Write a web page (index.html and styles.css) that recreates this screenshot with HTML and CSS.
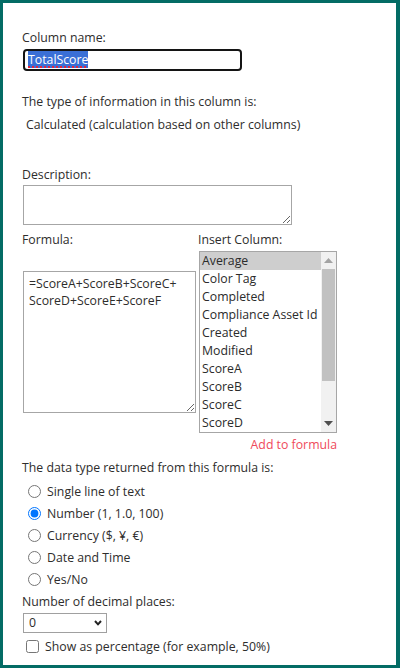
FILE: index.html
```html
<!DOCTYPE html>
<html lang="en">
<head>
<meta charset="utf-8">
<title>Column settings</title>
<link rel="stylesheet" href="styles.css">
</head>
<body>
<div class="panel">
  <div class="label">Column name:</div>
  <div class="name-input"><span class="sel">TotalScore</span></div>

  <div class="type-label">The type of information in this column is:</div>
  <div class="type-value">Calculated (calculation based on other columns)</div>

  <div class="desc-label">Description:</div>
  <textarea class="desc-box"></textarea>

  <div class="formula-row">
    <div class="formula-col">
      <div class="label">Formula:</div>
      <textarea class="formula-box">=ScoreA+ScoreB+ScoreC+
ScoreD+ScoreE+ScoreF</textarea>
    </div>
    <div class="insert-col">
      <div class="label">Insert Column:</div>
      <div class="listbox">
        <div class="items">
          <div class="item selected">Average</div>
          <div class="item">Color Tag</div>
          <div class="item">Completed</div>
          <div class="item">Compliance Asset Id</div>
          <div class="item">Created</div>
          <div class="item">Modified</div>
          <div class="item">ScoreA</div>
          <div class="item">ScoreB</div>
          <div class="item">ScoreC</div>
          <div class="item">ScoreD</div>
        </div>
        <div class="scrollbar">
          <div class="arrow up"><svg width="9" height="5" viewBox="0 0 9 5"><polygon points="0,5 4.5,0 9,5" fill="#a3a3a3"/></svg></div>
          <div class="track"><div class="thumb"></div></div>
          <div class="arrow down"><svg width="9" height="5" viewBox="0 0 9 5"><polygon points="0,0 4.5,5 9,0" fill="#505050"/></svg></div>
        </div>
      </div>
      <div class="add-link">Add to formula</div>
    </div>
  </div>

  <div class="return-label">The data type returned from this formula is:</div>
  <div class="radios">
    <label class="radio-row"><input type="radio" name="rt"><span>Single line of text</span></label>
    <label class="radio-row"><input type="radio" name="rt" checked><span>Number (1, 1.0, 100)</span></label>
    <label class="radio-row"><input type="radio" name="rt"><span>Currency ($, ¥, €)</span></label>
    <label class="radio-row"><input type="radio" name="rt"><span>Date and Time</span></label>
    <label class="radio-row"><input type="radio" name="rt"><span>Yes/No</span></label>
  </div>

  <div class="dec-label">Number of decimal places:</div>
  <div class="select"><span>0</span><svg class="chev" width="8" height="6" viewBox="0 0 8 6"><polyline points="1,1 4,4.3 7,1" fill="none" stroke="#222" stroke-width="2"/></svg></div>

  <label class="check-row"><input type="checkbox"><span>Show as percentage (for example, 50%)</span></label>
</div>
</body>
</html>
```

FILE: styles.css
```css
html, body {
  margin: 0;
  padding: 0;
  background: #ffffff;
}

.panel {
  box-sizing: border-box;
  width: 400px;
  height: 668px;
  border: 3px solid #036c65;
  border-right-width: 4px;
  padding: 26px 0 0 19px;
  font-family: "Open Sans", "Noto Sans", sans-serif;
  font-size: 12.3px;
  line-height: 17px;
  color: #2e2d2c;
  overflow: hidden;
}

.label {
  height: 17px;
}

.name-input {
  box-sizing: border-box;
  margin: 3px 0 0 1px;
  width: 219px;
  height: 22px;
  border: 2px solid #141414;
  border-radius: 4px;
  padding: 0 0 0 3px;
  line-height: 18px;
}

.sel {
  display: inline-block;
  background: #3a6fd6;
  color: #ffffff;
  line-height: 17px;
  text-decoration-line: underline;
  text-decoration-style: dotted;
  text-decoration-color: #e3263d;
  text-decoration-thickness: 2px;
  text-underline-offset: 2px;
}

.type-label {
  margin-top: 22px;
}

.type-value {
  margin-top: 6px;
  padding-left: 4px;
}

.desc-label {
  margin-top: 33px;
}

textarea {
  display: block;
  box-sizing: border-box;
  margin: 0;
  font: inherit;
  color: inherit;
  border: 1px solid #a6a6a6;
  border-radius: 0;
  outline: none;
  resize: both;
  background: #ffffff;
}

.desc-box {
  margin: 2px 0 0 1px;
  width: 269px;
  height: 40px;
  padding: 2px 5px;
}

.formula-row {
  display: flex;
  margin-top: 6px;
}

.formula-col {
  width: 176px;
}

.formula-box {
  margin: 23px 0 0 1px;
  width: 173px;
  height: 142px;
  padding: 3px 5px;
  line-height: 17px;
  overflow: hidden;
}

.insert-col {
  width: 139px;
}

.listbox {
  box-sizing: border-box;
  display: flex;
  margin: 3px 0 0 1px;
  width: 138px;
  height: 182px;
  border: 1px solid #a6a6a6;
}

.items {
  flex: 1;
  overflow: hidden;
  min-width: 0;
}

.item {
  height: 18px;
  line-height: 18px;
  padding-left: 2px;
  white-space: nowrap;
  overflow: hidden;
  color: #2b2b2b;
}

.item.selected {
  background: #cecece;
}

.scrollbar {
  width: 15px;
  background: #f1f1f1;
  display: flex;
  flex-direction: column;
}

.arrow {
  height: 17px;
  display: flex;
  align-items: center;
  justify-content: center;
}

.track {
  flex: 1;
  padding: 0 1px 0 1px;
}

.thumb {
  height: 112px;
  background: #c1c1c1;
}

.add-link {
  margin-top: 3px;
  text-align: right;
  color: #ef4a5b;
}

.return-label {
  margin-top: 6px;
}

.radios {
  margin-top: 4px;
}

.radio-row {
  display: flex;
  align-items: center;
  height: 22px;
}

.radio-row input {
  width: 13px;
  height: 13px;
  margin: 0 6px 0 6px;
}

.dec-label {
  margin-top: 3px;
}

.select {
  box-sizing: border-box;
  display: flex;
  align-items: center;
  justify-content: space-between;
  margin: 3px 0 0 1px;
  width: 84px;
  height: 20px;
  border: 1px solid #a0a0a0;
  padding: 0 4px 0 5px;
  line-height: 18px;
}

.chev {
  display: block;
}

.check-row {
  display: flex;
  align-items: center;
  margin-top: 3px;
  height: 20px;
}

.check-row input {
  width: 13px;
  height: 13px;
  margin: 0 6px 0 4px;
}
```
